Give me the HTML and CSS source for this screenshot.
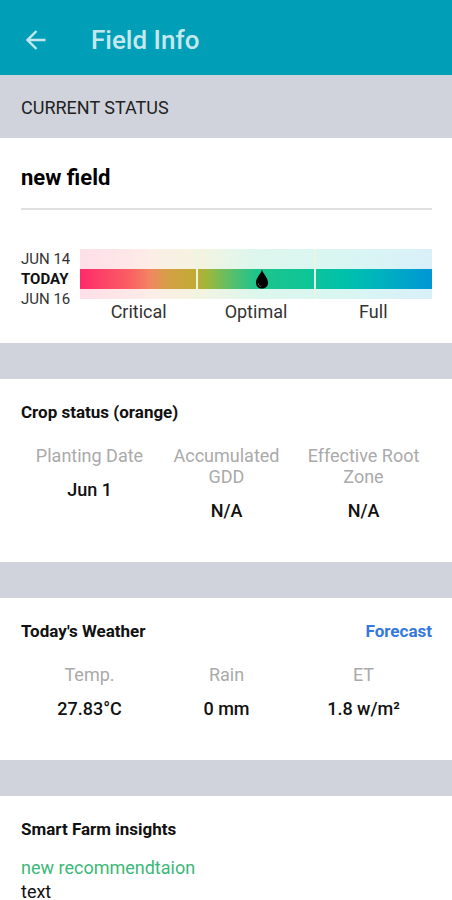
FILE: index.html
```
<!DOCTYPE html>
<html lang="en">
<head>
    <meta charset="UTF-8">
    <meta name="viewport" content="width=device-width, initial-scale=1.0">
    <title>Field Info</title>
    <link rel="stylesheet" href="styles.css">
</head>
<body>
    <header class="top-bar">
        <button class="back-button" type="button" aria-label="Back">
            <svg width="20" height="20" viewBox="0 0 20 20" fill="none" stroke="currentColor" stroke-width="2.400">
                <path d="M19.500 10H2M10.500 1L1.500 10l9 9"/>
            </svg>
        </button>
        <h1>Field Info</h1>
    </header>
    <main>
        <h2 class="status-heading">CURRENT STATUS</h2>
        <section class="panel field-panel">
            <h3 class="field-name">new field</h3>
            <div class="moisture">
                <div class="days">
                    <span>JUN 14</span>
                    <span class="today">TODAY</span>
                    <span>JUN 16</span>
                </div>
                <div class="meter">
                    <div class="scale">
                        <div class="bar faded"></div>
                        <div class="bar">
                            <svg class="drop" width="14" height="20" viewBox="0 0 14 20">
                                <path d="M7 0.500C8 5 13 8.500 13 13.500C13 17.500 10.300 19.500 7 19.500S1 17.500 1 13.500C1 8.500 6 5 7 0.500z"/>
                                <path d="M3.200 14.200c.2 1.800 1.200 2.900 2.700 3.400" fill="none" stroke="#777" stroke-width="0.800"/>
                            </svg>
                        </div>
                        <div class="bar faded short"></div>
                        <div class="dividers"><i></i><i></i><i></i></div>
                    </div>
                    <div class="levels">
                        <span>Critical</span>
                        <span>Optimal</span>
                        <span>Full</span>
                    </div>
                </div>
            </div>
        </section>

        <section class="panel">
            <h3>Crop status (orange)</h3>
            <dl class="stats">
                <div>
                    <dt>Planting Date</dt>
                    <dd>Jun 1</dd>
                </div>
                <div>
                    <dt>Accumulated GDD</dt>
                    <dd>N/A</dd>
                </div>
                <div>
                    <dt>Effective Root Zone</dt>
                    <dd>N/A</dd>
                </div>
            </dl>
        </section>

        <section class="panel">
            <div class="panel-title">
                <h3>Today's Weather</h3>
                <a href="#forecast">Forecast</a>
            </div>
            <dl class="stats">
                <div>
                    <dt>Temp.</dt>
                    <dd>27.83°C</dd>
                </div>
                <div>
                    <dt>Rain</dt>
                    <dd>0 mm</dd>
                </div>
                <div>
                    <dt>ET</dt>
                    <dd>1.8 w/m²</dd>
                </div>
            </dl>
        </section>

        <section class="panel insights">
            <h3>Smart Farm insights</h3>
            <p class="insight-title">new recommendtaion</p>
            <p>text</p>
        </section>
    </main>
</body>
</html>
```
FILE: styles.css
```
* {
    box-sizing: border-box;
}
body {
    margin: 0;
    font-family: Roboto, sans-serif;
    font-size: 18px;
    line-height: 21px;
    color: #111;
    background-color: #fff;
}
h1, h2, h3, p, dl, dd {
    margin: 0;
}
.top-bar {
    display: flex;
    align-items: center;
    gap: 45px;
    padding: 25px 26px 20px;
    background-color: #009fb7;
    color: #c4e8ed;
}
.top-bar h1 {
    font-size: 26px;
    font-weight: 500;
    line-height: 30px;
}
.back-button {
    display: flex;
    padding: 0;
    border: 0;
    background: none;
    color: inherit;
}
main {
    display: grid;
    gap: 36px;
    background-color: #d0d3dc;
}
.status-heading {
    padding: 22px 21px 20px;
    margin-bottom: -36px;
    font-size: 18px;
    font-weight: 400;
    color: #222;
}
.panel {
    padding: 23px 20px 41px 21px;
    background-color: #fff;
}
.panel h3, .panel a {
    font-size: 17px;
    font-weight: 700;
    color: #111;
}
.panel a {
    color: #3478dc;
    text-decoration: none;
}
.panel-title {
    display: flex;
    justify-content: space-between;
}
.field-panel {
    padding: 28px 20px 21px 21px;
}
.panel .field-name {
    padding-bottom: 18px;
    border-bottom: 2px solid #e0e0e0;
    font-size: 22px;
    line-height: 24px;
    color: #000;
}
.moisture {
    display: flex;
    gap: 8px;
    margin-top: 37px;
}
.days {
    display: flex;
    flex-direction: column;
    width: 51px;
    padding-top: 2px;
    font-size: 15px;
    line-height: 20px;
    white-space: nowrap;
    color: #333;
}
.today {
    font-weight: 700;
    color: #111;
}
.meter {
    flex: 1;
}
.scale {
    position: relative;
    padding-top: 2px;
}
.bar {
    display: flex;
    justify-content: center;
    height: 20px;
    padding-left: 12px;
    background: linear-gradient(to right, #ff2a6b 0%, #fa5f64 14%, #f28660 20%, #d89d4a 24%, #c0ab32 33%, #a0b63c 36%, #50c070 44%, #1ec48b 50%, #0fc597 64%, #00c0ac 76%, #00b4bb 84%, #0096d6 100%);
}
.faded {
    opacity: 0.15;
}
.short {
    height: 10px;
}
/* white lines between the three levels */
.dividers {
    position: absolute;
    inset: 2px 0 0;
    display: grid;
    grid-template-columns: repeat(3, 1fr);
}
.dividers i + i {
    margin-left: -1px;
    border-left: 2px solid #e8f6e2;
}
.levels {
    display: grid;
    grid-template-columns: repeat(3, 1fr);
    margin-top: 2px;
    text-align: center;
    color: #333;
}
.stats {
    display: grid;
    grid-template-columns: repeat(3, 1fr);
    margin-top: 22px;
    text-align: center;
}
.stats dt {
    padding: 0 12px;
    color: #aaa;
}
.stats dd {
    margin-top: 13px;
    font-weight: 500;
}
.insights {
    padding-bottom: 0;
}
.insights p {
    line-height: 24px;
}
.insights .insight-title {
    margin-top: 16px;
    color: #3cb878;
}
```
